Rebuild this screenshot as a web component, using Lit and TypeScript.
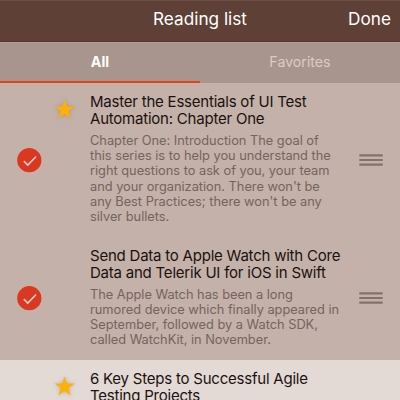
import { LitElement, html, css, nothing } from "lit";
import { customElement, property } from "lit/decorators.js";

interface Article {
  title: string[];
  summary: string[];
  starred: boolean;
  selected: boolean;
}

const ARTICLES: Article[] = [
  {
    title: ["Master the Essentials of UI Test", "Automation: Chapter One"],
    summary: [
      "Chapter One: Introduction The goal of",
      "this series is to help you understand the",
      "right questions to ask of you, your team",
      "and your organization. There won't be",
      "any Best Practices; there won't be any",
      "silver bullets.",
    ],
    starred: true,
    selected: true,
  },
  {
    title: ["Send Data to Apple Watch with Core", "Data and Telerik UI for iOS in Swift"],
    summary: [
      "The Apple Watch has been a long",
      "rumored device which finally appeared in",
      "September, followed by a Watch SDK,",
      "called WatchKit, in November.",
    ],
    starred: false,
    selected: true,
  },
  {
    title: ["6 Key Steps to Successful Agile", "Testing Projects"],
    summary: [],
    starred: true,
    selected: false,
  },
];

@customElement("article-row")
export class ArticleRow extends LitElement {
  @property({ attribute: false }) article!: Article;

  static styles = css`
    :host {
      display: block;
      flex: none;
    }
    .row {
      display: grid;
      grid-template-columns: 54px 36px 1fr 41px;
      background: #e3d9d5;
      min-height: 60px;
    }
    .selected {
      background: #c4b1a9;
    }
    .check {
      align-self: center;
      padding-left: 17px;
      height: 24px;
    }
    .star {
      padding-top: 16.2px;
    }
    svg {
      display: block;
      overflow: visible;
    }
    .star svg {
      filter: drop-shadow(0 0 2px rgba(90, 75, 90, 0.3));
    }
    .text {
      padding: 9.8px 0 12.2px;
      white-space: nowrap;
    }
    .title {
      font-size: 15px;
      line-height: 17.5px;
      letter-spacing: -0.22px;
      color: #1b1210;
    }
    .summary {
      margin-top: 5px;
      font-size: 12.8px;
      line-height: 15.3px;
      letter-spacing: -0.01px;
      color: #75645d;
    }
    .line {
      display: block;
    }
    .handle {
      display: block;
      align-self: center;
    }
  `;

  render() {
    const a = this.article;
    return html`<div class="row ${a.selected ? "selected" : ""}">
      <div class="check">
        ${a.selected
          ? html`<svg width="25" height="25" viewBox="0 0 25 25">
              <circle cx="12.3" cy="12.2" r="12.1" fill="#da3820" />
              <path d="M6.8 13.1l4 4 8.3-8.5" fill="none" stroke="#f0d3cc" stroke-width="1.5" />
            </svg>`
          : nothing}
      </div>
      <div class="star">
        ${a.starred
          ? html`<svg width="21" height="20" viewBox="0 0 21 20">
              <path
                d="M10.6 0.5l2.5 7h7.5l-6 4.6 2.2 7.5-6.2-4.5-6.2 4.5 2.2-7.5-6-4.6h7.5z"
                fill="#fbb105"
              />
            </svg>`
          : nothing}
      </div>
      <div class="text">
        <div class="title">${a.title.map((t) => html`<span class="line">${t}</span>`)}</div>
        <div class="summary">${a.summary.map((t) => html`<span class="line">${t}</span>`)}</div>
      </div>
      ${a.selected
        ? html`<svg class="handle" width="24" height="12" viewBox="0 0 24 12">
            <path d="M.3 1.4h23.4M.3 6h23.4M.3 10.6h23.4" stroke="#85726b" stroke-width="2.2" />
          </svg>`
        : nothing}
    </div>`;
  }
}

@customElement("app-root")
export class AppRoot extends LitElement {
  static styles = css`
    :host {
      display: flex;
      flex-direction: column;
      width: 400px;
      height: 400px;
      overflow: hidden;
      background: #e3d9d5;
      font-family: Inter, "Liberation Sans", sans-serif;
    }
    .bar {
      flex: none;
      box-sizing: border-box;
      display: grid;
      grid-template-columns: 1fr auto 1fr;
      height: 42px;
      padding-right: 9px;
      padding-left: 9px;
      border-top: 1px solid #6b4d43;
      border-bottom: 1px solid #50352d;
      background: #5e4037;
      color: #fff;
      font-size: 17.2px;
      line-height: 35.4px;
    }
    .heading {
      grid-column: 2;
    }
    .done {
      text-align: right;
    }
    .tabs {
      flex: none;
      box-sizing: border-box;
      display: grid;
      grid-template-columns: 1fr 1fr;
      height: 41px;
      border-top: 1px solid #b3a097;
      background: #a8958d;
      color: #d9ccc6;
      font-size: 14.2px;
      line-height: 37px;
      text-align: center;
    }
    .tab {
      box-sizing: border-box;
      height: 40px;
    }
    .active {
      border-bottom: 2px solid #e6430f;
      color: #fff;
      font-weight: 700;
    }
  `;

  render() {
    return html`
      <div class="bar">
        <span class="heading">Reading list</span>
        <span class="done">Done</span>
      </div>
      <div class="tabs">
        <div class="tab active">All</div>
        <div class="tab">Favorites</div>
      </div>
      ${ARTICLES.map((a) => html`<article-row .article=${a}></article-row>`)}
    `;
  }
}
